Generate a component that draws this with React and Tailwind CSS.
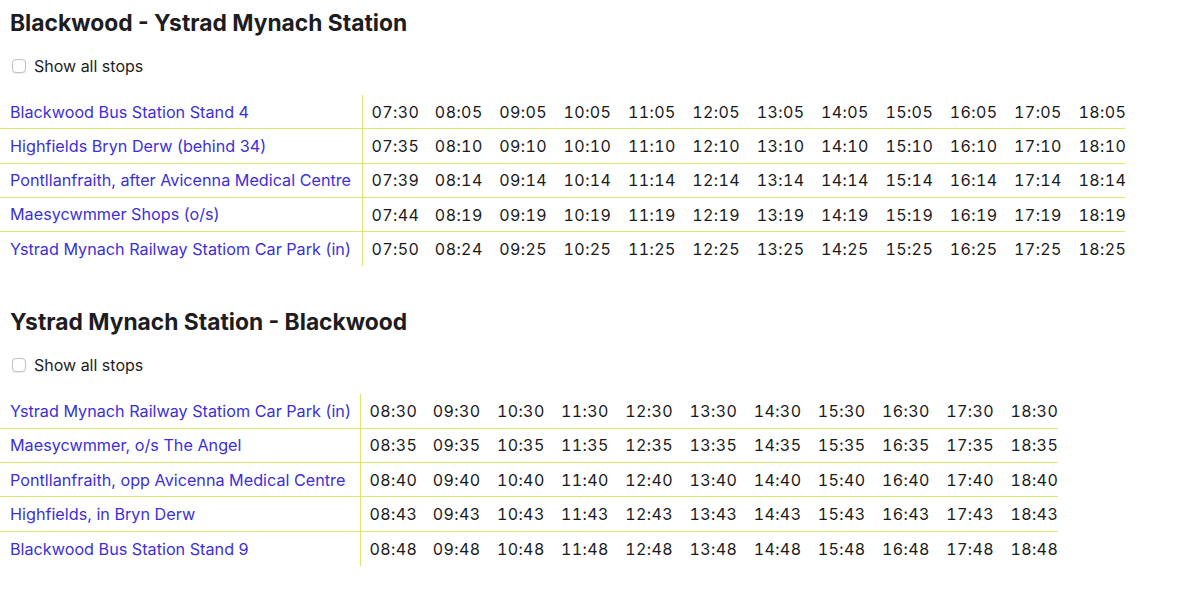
import React from "react";

const t1 = {
  title: "Blackwood - Ystrad Mynach Station",
  stopW: "grid-cols-[362px_repeat(11,64.36px)_1fr]",
  w: "w-[1125px]",
  rows: [
    ["Blackwood Bus Station Stand 4", ["07:30","08:05","09:05","10:05","11:05","12:05","13:05","14:05","15:05","16:05","17:05","18:05"]],
    ["Highfields Bryn Derw (behind 34)", ["07:35","08:10","09:10","10:10","11:10","12:10","13:10","14:10","15:10","16:10","17:10","18:10"]],
    ["Pontllanfraith, after Avicenna Medical Centre", ["07:39","08:14","09:14","10:14","11:14","12:14","13:14","14:14","15:14","16:14","17:14","18:14"]],
    ["Maesycwmmer Shops (o/s)", ["07:44","08:19","09:19","10:19","11:19","12:19","13:19","14:19","15:19","16:19","17:19","18:19"]],
    ["Ystrad Mynach Railway Statiom Car Park (in)", ["07:50","08:24","09:25","10:25","11:25","12:25","13:25","14:25","15:25","16:25","17:25","18:25"]],
  ],
};

const t2 = {
  title: "Ystrad Mynach Station - Blackwood",
  stopW: "grid-cols-[360px_repeat(10,64.2px)_1fr]",
  w: "w-[1058px]",
  rows: [
    ["Ystrad Mynach Railway Statiom Car Park (in)", ["08:30","09:30","10:30","11:30","12:30","13:30","14:30","15:30","16:30","17:30","18:30"]],
    ["Maesycwmmer, o/s The Angel", ["08:35","09:35","10:35","11:35","12:35","13:35","14:35","15:35","16:35","17:35","18:35"]],
    ["Pontllanfraith, opp Avicenna Medical Centre", ["08:40","09:40","10:40","11:40","12:40","13:40","14:40","15:40","16:40","17:40","18:40"]],
    ["Highfields, in Bryn Derw", ["08:43","09:43","10:43","11:43","12:43","13:43","14:43","15:43","16:43","17:43","18:43"]],
    ["Blackwood Bus Station Stand 9", ["08:48","09:48","10:48","11:48","12:48","13:48","14:48","15:48","16:48","17:48","18:48"]],
  ],
};

function Section({ data, first }) {
  return (
    <section className={first ? "pt-[9px]" : "pt-[42px]"}>
      <h2 className="px-[10px] text-[22.8px] leading-[28px] font-bold text-[#1d1d1f]">
        {data.title}
      </h2>
      <label className="mt-[17px] flex h-[24px] items-center pl-[12px] text-[16px] leading-[24px] text-[#1d1d1f]">
        <span className="h-[14px] w-[14px] rounded-[4px] border border-[#c2c2c2] bg-white shadow-[0_0.5px_1px_rgba(0,0,0,0.08)]" />
        <span className="ml-[8px]">Show all stops</span>
      </label>
      <div className={`mt-[17px] ${data.w}`}>
        {data.rows.map(([stop, times], i) => (
          <div
            key={stop}
            className={`grid ${data.stopW} h-[34.3px] items-stretch ${
              i < data.rows.length - 1 ? "border-b border-[#dcea6c]" : ""
            }`}
          >
            <div className="flex items-center pl-[10px] text-[16.2px] text-[#3c2fd9] whitespace-nowrap">
              {stop}
            </div>
            {times.map((t, j) => (
              <div
                key={j}
                className={`flex items-center pl-[8.5px] text-[16px] tabular-nums tracking-[0.4px] text-[#1a1a1a] ${
                  j === 0 ? "border-l border-[#dcea6c]" : ""
                }`}
              >
                {t}
              </div>
            ))}
          </div>
        ))}
      </div>
    </section>
  );
}

export default function App() {
  return (
    <div className="min-h-[592px] bg-white font-['Inter',sans-serif]">
      <Section data={t1} first />
      <Section data={t2} />
    </div>
  );
}
